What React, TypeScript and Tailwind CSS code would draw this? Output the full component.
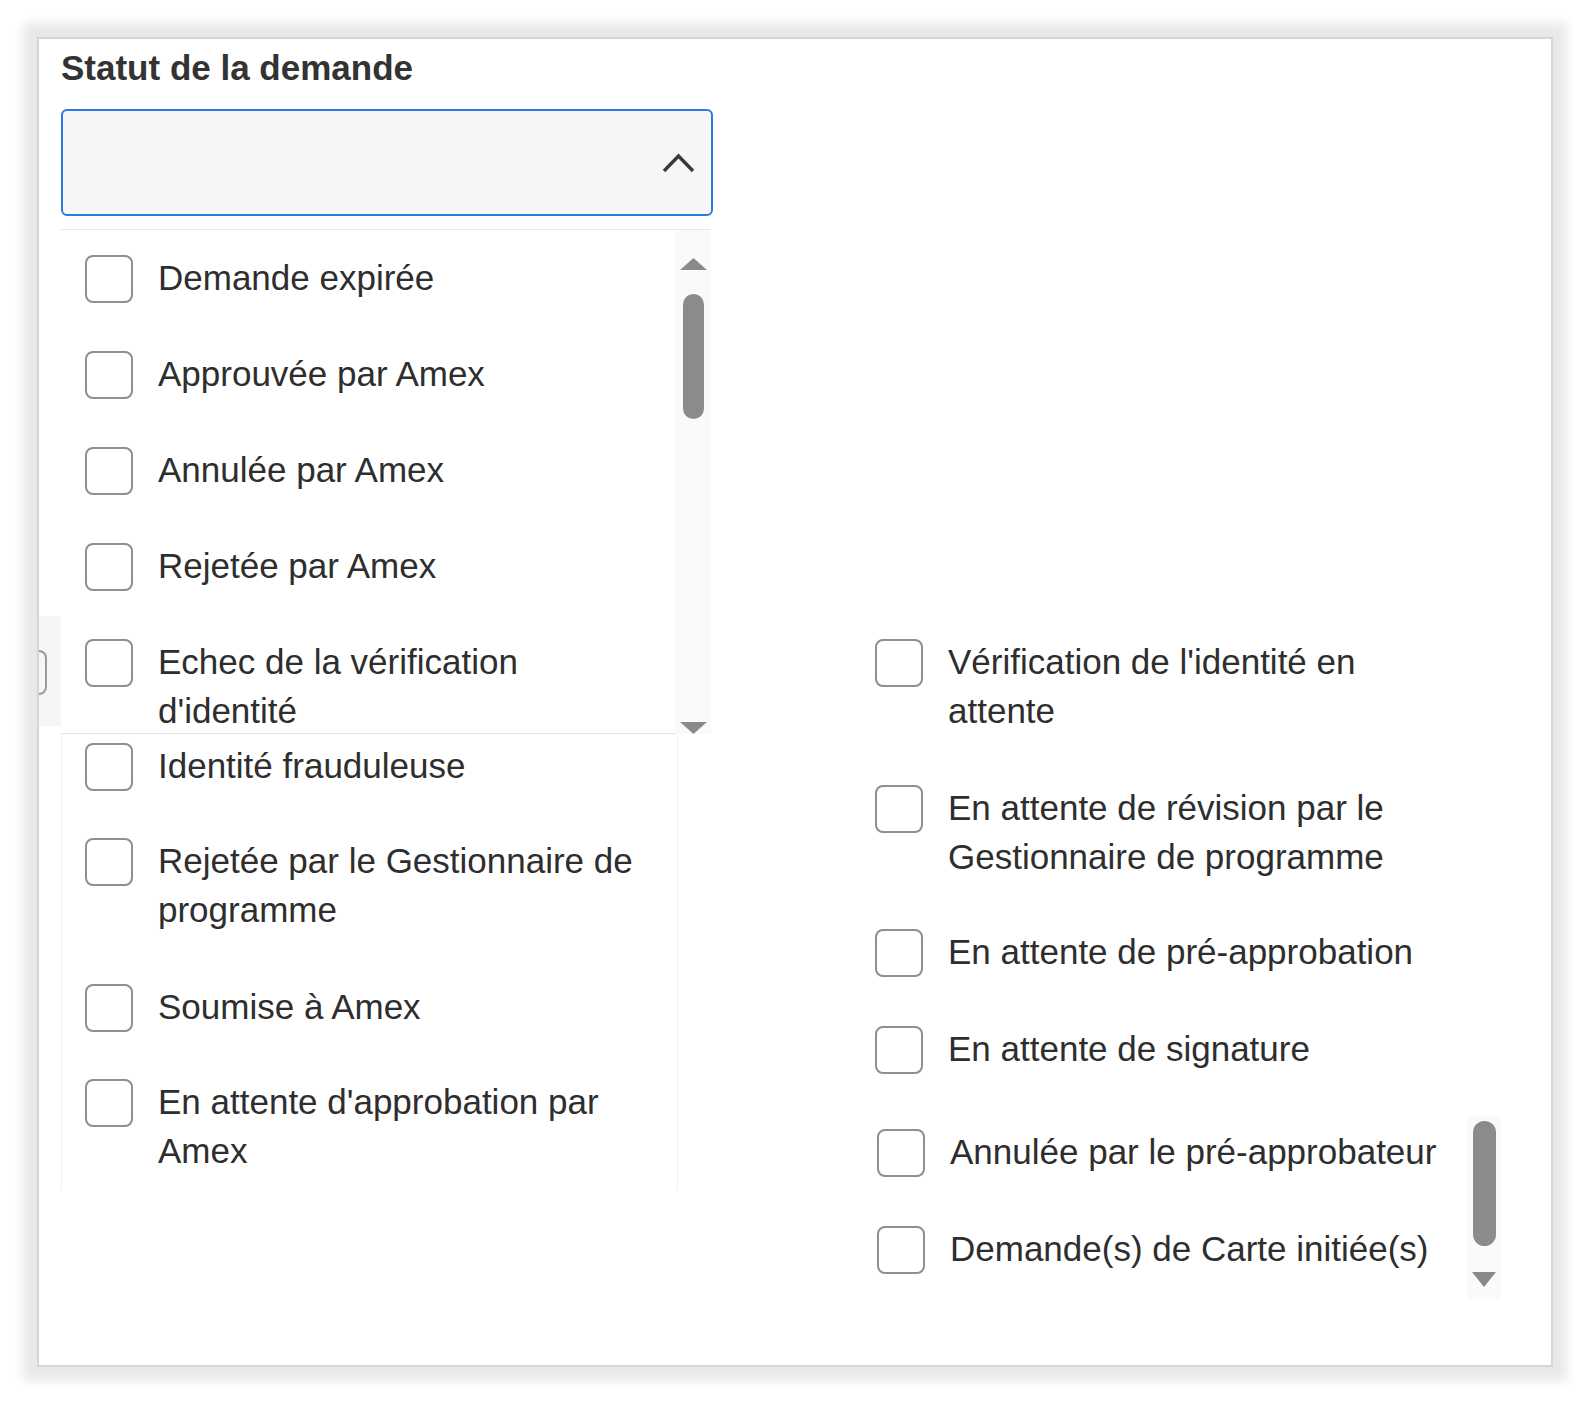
import React from 'react';

// Statut de la demande — multi-select filter, opened

function Check() {
  return <span className="mt-[2px] block h-[48px] w-[48px] shrink-0 rounded-[8px] border-2 border-[#8f8f8f] bg-white" />;
}

function Row({ children, className = '' }: { children: React.ReactNode; className?: string }) {
  return (
    <div className={`flex items-start gap-[25px] ${className}`}>
      <Check />
      <span className="whitespace-nowrap text-[35px] leading-[49px] text-[#2e2e2e]">{children}</span>
    </div>
  );
}

function TriangleUp() {
  return (
    <svg width="27" height="12" viewBox="0 0 27 12" className="block">
      <path d="M13.5 0 L27 12 L0 12 Z" fill="#8a8a8a" />
    </svg>
  );
}

function TriangleDown({ w = 27, h = 12 }: { w?: number; h?: number }) {
  return (
    <svg width={w} height={h} viewBox={`0 0 ${w} ${h}`} className="block">
      <path d={`M0 0 L${w} 0 L${w / 2} ${h} Z`} fill="#8a8a8a" />
    </svg>
  );
}

export default function App() {
  return (
    <div className="min-h-screen bg-white p-[37px] font-['Liberation_Sans',Arial,sans-serif]">
      <div className="relative h-[1330px] w-[1516px] border-2 border-[#d6d6d6] bg-white pl-[22px] pt-[9px] shadow-[0_0_10px_14px_rgba(0,0,0,0.09)]">
        {/* bit of the page underneath the open list */}
        <div className="absolute left-0 top-[577px] h-[110px] w-[22px] bg-[#f5f6f8]">
          <div className="mt-[34px] h-[45px] w-[8px] rounded-r-[8px] border-y-2 border-r-2 border-[#9a9a9a]" />
        </div>

        <h2 className="text-[35px] font-bold leading-[40px] text-[#333]">Statut de la demande</h2>

        <div className="mt-[21px] flex h-[107px] w-[652px] items-center justify-end rounded-[6px] border-2 border-[#2b7bdf] bg-[#f5f6f8] pr-[16px]">
          <svg width="33" height="21" viewBox="0 0 33 21">
            <polyline points="2,19 16.5,4 31,19" fill="none" stroke="#3a3a3a" strokeWidth="3.4" />
          </svg>
        </div>

        <div className="mt-[13px] flex items-start">
          {/* left column: open list + what sits below it */}
          <div className="w-[650px]">
            <div className="flex h-[505px] overflow-hidden border-t border-[#e6e6e6]">
              <div className="flex w-[614px] flex-col gap-[46px] border-b border-[#e4e4e4] pl-[24px] pt-[23px]">
                <Row>Demande expirée</Row>
                <Row>Approuvée par Amex</Row>
                <Row>Annulée par Amex</Row>
                <Row>Rejetée par Amex</Row>
                <Row>
                  Echec de la vérification
                  <br />
                  d'identité
                </Row>
              </div>
              <div className="flex w-[36px] flex-col items-center bg-[#fafafa]">
                <div className="mt-[28px]">
                  <TriangleUp />
                </div>
                <div className="mt-[24px] h-[125px] w-[21px] rounded-full bg-[#8b8b8b]" />
                <div className="mt-[303px]">
                  <TriangleDown />
                </div>
              </div>
            </div>
            <div className="flex h-[456px] w-[617px] flex-col border-x border-[#f0f0f0] pl-[23px] pt-[7px]">
              <Row>Identité frauduleuse</Row>
              <Row className="mt-[45px]">
                Rejetée par le Gestionnaire de
                <br />
                programme
              </Row>
              <Row className="mt-[48px]">Soumise à Amex</Row>
              <Row className="mt-[45px]">
                En attente d'approbation par
                <br />
                Amex
              </Row>
            </div>
          </div>

          {/* right column */}
          <div className="ml-[140px] flex w-[650px] items-start">
            <div className="flex w-[616px] flex-col pl-[24px] pt-[408px]">
              <Row>
                Vérification de l'identité en
                <br />
                attente
              </Row>
              <Row className="mt-[48px]">
                En attente de révision par le
                <br />
                Gestionnaire de programme
              </Row>
              <Row className="mt-[46px]">En attente de pré-approbation</Row>
              <Row className="mt-[47px]">En attente de signature</Row>
              <Row className="mt-[53px] pl-[2px]">Annulée par le pré-approbateur</Row>
              <Row className="mt-[47px] pl-[2px]">Demande(s) de Carte initiée(s)</Row>
            </div>
            <div className="mt-[887px] flex h-[183px] w-[34px] flex-col items-center bg-[#fafafa]">
              <div className="mt-[5px] h-[125px] w-[23px] rounded-full bg-[#8b8b8b]" />
              <div className="mt-[26px]">
                <TriangleDown w={24} h={15} />
              </div>
            </div>
          </div>
        </div>
      </div>
    </div>
  );
}
